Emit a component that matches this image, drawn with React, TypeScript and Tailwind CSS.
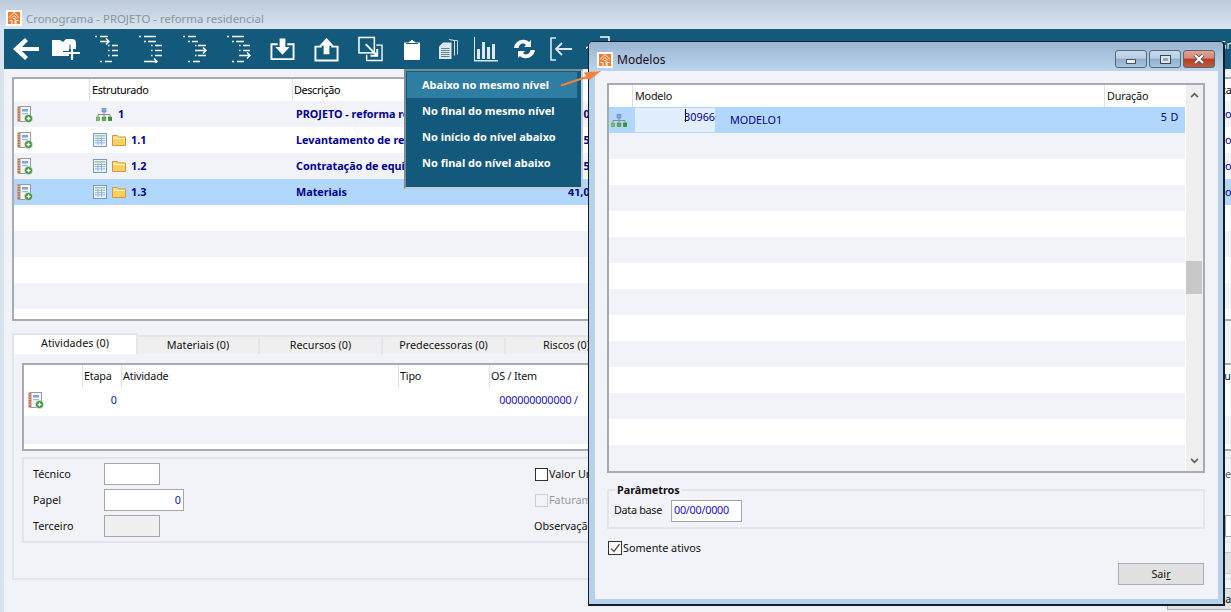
const blue = "text-[#00008b]";
const valueBlue = "text-[#1a10c0]";

const Logo = ({ className = "" }: { className?: string }) => (
  <svg viewBox="0 0 16 16" className={className}>
    <rect width="16" height="16" fill="#fff" />
    <rect x="2" y="2" width="12" height="12" fill="#f47b2a" />
    <path d="M8 2.500 3 7.500M8 2.500l5 5M8 5.500 5 8.500M8 5.500l3 3M3.500 10.500h2.500v3.500M12.500 10.500H10v3.500M7 8.500h2v5" stroke="#fff" strokeWidth="1" fill="none" />
  </svg>
);

const BookIcon = () => (
  <svg viewBox="0 0 16 17" className="w-4 h-[17px] shrink-0">
    <rect x="0.5" y="0.5" width="2.500" height="15" fill="#c8683a" />
    <path d="M0.500 2.500h2.500M0.500 5h2.500M0.500 7.500h2.500M0.500 10h2.500M0.500 12.500h2.500" stroke="#f3d2b8" strokeWidth="0.7" />
    <rect x="3" y="0.500" width="10.500" height="15" fill="#f7f7f7" stroke="#9a9a9a" />
    <rect x="5" y="3" width="6" height="2.500" fill="#7ba4de" />
    <rect x="5" y="7" width="6" height="1.200" fill="#9db8dc" />
    <circle cx="11.500" cy="12.500" r="4" fill="#3d8f3a" stroke="#e6f3e4" strokeWidth="0.6" />
    <path d="M11.500 10.500v4M9.500 12.500h4" stroke="#fff" strokeWidth="1.300" />
  </svg>
);

const TreeIcon = () => (
  <svg viewBox="0 0 16 13" className="w-4 h-[13px] shrink-0">
    <rect x="6" y="0" width="4" height="4" fill="#7ba7e6" stroke="#5a87c8" strokeWidth="0.6" />
    <path d="M8 4v2.500M2 8.500v-2h12v2M8 6.500v2" stroke="#8a8a8a" fill="none" />
    <rect x="0" y="9" width="3.600" height="3.600" fill="#7cc265" stroke="#4f9a40" strokeWidth="0.6" />
    <rect x="6.200" y="9" width="3.600" height="3.600" fill="#5cae4c" stroke="#3f8c34" strokeWidth="0.6" />
    <rect x="12.400" y="9" width="3.600" height="3.600" fill="#3b9a35" stroke="#2c7f28" strokeWidth="0.6" />
  </svg>
);

const TableIcon = () => (
  <svg viewBox="0 0 14 14" className="w-3.5 h-3.5 shrink-0">
    <rect x="0.500" y="0.500" width="13" height="13" fill="#eef4fb" stroke="#6f9bd0" />
    <rect x="2" y="2" width="10" height="1.600" fill="#9ed08c" />
    <path d="M2 5.500h10M2 7.700h10M2 9.900h10M5 4v8M8.500 4v8" stroke="#8fb0da" strokeWidth="0.9" />
  </svg>
);

const FolderIcon = () => (
  <svg viewBox="0 0 14 12" className="w-3.5 h-3 shrink-0">
    <path d="M0.500 1.500h5l1 1.500h7v8.500H.5z" fill="#f9dc7c" stroke="#d9923a" />
    <path d="M1.500 5h11.500v6H1.500z" fill="#f8d25e" />
    <path d="M1.500 4.500h11.500" stroke="#fff3c4" />
  </svg>
);

// tree list icons of the toolbar, arrow sits at a different row in each one
const listPaths: Record<number, string> = {
  1: "M0 1.500h2M5 1.500h8M5 6.500h9M11 3.500l3 3-3 3M13 10.500h1.500M17 10.500h6M13 15.500h1.500M17 15.500h6M13 20.500h1.500M17 20.500h6M5 26.500h2M10 26.500h7",
  2: "M0 1.500h2M5 1.500h12M5 6.500h2M9 6.500h8M12 10.500h1.500M16 10.500h7M12 15.500h1.500M16 15.500h7M12 20.500h1.500M16 20.500h7M5 26.500h13M15 23.500l3 3-3 3",
  3: "M0 1.500h2M5 1.500h8M5 6.500h2M9 6.500h6M12 10.500h1.500M15 10.500h8M12 15.500h11M20 12.500l3 3-3 3M12 20.500h1.500M15 20.500h8M5 26.500h2M10 26.500h7",
  4: "M0 1.500h2M5 1.500h12M5 6.500h2M9 6.500h8M12 10.500h1.500M16 10.500h7M12 15.500h1.500M16 15.500h7M12 20.500h11M20 17.500l3 3-3 3M5 26.500h2M10 26.500h7",
};

const ListIcon = ({ v }: { v: number }) => (
  <svg viewBox="0 0 24 28" className="w-6 h-7" stroke="#fff" strokeWidth="1.400" fill="none">
    <path d={listPaths[v]} />
  </svg>
);

const tools: { w: string; icon: React.ReactNode }[] = [
  {
    w: "w-[39px]",
    icon: (
      <svg viewBox="0 0 26 24" className="w-[26px] h-6" fill="#fff">
        <path d="M12 1 0 12l12 11 3-3-6-6h17v-4H9l6-6z" />
      </svg>
    ),
  },
  {
    w: "w-[43px]",
    icon: (
      <svg viewBox="0 0 28 26" className="w-7 h-[26px]">
        <path d="M0 4h8l3 2 3-3h6q4 0 4 4v6h-7v7H0z" fill="#fff" />
        <path d="M20 9v15M13 17h15" stroke="#fff" strokeWidth="2.200" />
        <path d="M18 8.500v7h-7" stroke="#13597c" strokeWidth="1" fill="none" />
      </svg>
    ),
  },
  { w: "w-[44px]", icon: <ListIcon v={1} /> },
  { w: "w-[44px]", icon: <ListIcon v={2} /> },
  { w: "w-[44px]", icon: <ListIcon v={3} /> },
  { w: "w-[43px]", icon: <ListIcon v={4} /> },
  {
    w: "w-[44px]",
    icon: (
      <svg viewBox="0 0 26 24" className="w-[25px] h-6" fill="none">
        <path d="M8 7H1.500v15.500h23V7H18" stroke="#fff" strokeWidth="2" />
        <path d="M10 1h6v9h4.500L13 18 5.500 10H10z" fill="#fff" />
      </svg>
    ),
  },
  {
    w: "w-[44px]",
    icon: (
      <svg viewBox="0 0 26 26" className="w-[25px] h-[25px]" fill="none">
        <path d="M8 10H1.500v14.500h23V10H18" stroke="#fff" strokeWidth="2" />
        <path d="M13 1l7.500 8H16v9h-6V9H5.500z" fill="#fff" />
      </svg>
    ),
  },
  {
    w: "w-[45px]",
    icon: (
      <svg viewBox="0 0 26 26" className="w-[25px] h-[26px]" fill="none" stroke="#fff">
        <rect x="1" y="1" width="16" height="16" strokeWidth="1.600" />
        <path d="M19 9h6v16H9v-6" strokeWidth="1.400" />
        <path d="M8 8l12 12M20 13v7h-7" strokeWidth="2" />
      </svg>
    ),
  },
  {
    w: "w-[35px]",
    icon: (
      <svg viewBox="0 0 18 21" className="w-[18px] h-[21px]" fill="#fff">
        <path d="M1 3.500h4.500L7 2h1V1h2v1h1l1.500 1.500H17V21H1z" />
        <path d="M3 4.500h12" stroke="#13597c" strokeWidth="1" />
      </svg>
    ),
  },
  {
    w: "w-[35px]",
    icon: (
      <svg viewBox="0 0 21 21" className="w-[21px] h-[21px]" fill="none">
        <path d="M15 1.500h4.500v14" stroke="#c3d2db" />
        <path d="M11 .5l5.500 1v15" stroke="#dfe7ec" />
        <path d="M5 3.500h8.500V20H1V7.500z" fill="#dfe7ec" />
        <path d="M3 9.500h8.500M3 11.500h8.500M3 13.500h8.500M3 15.500h8.500M3 17.500h8.500" stroke="#5f8397" />
      </svg>
    ),
  },
  {
    w: "w-[41px]",
    icon: (
      <svg viewBox="0 0 25 25" className="w-[25px] h-[25px]" fill="#dfe9ef">
        <path d="M1 0h1v23h23v1.500H1z" />
        <rect x="4" y="12" width="3" height="10" />
        <rect x="9" y="5" width="3" height="17" />
        <rect x="14" y="10" width="3" height="12" />
        <rect x="19" y="7" width="3" height="15" />
      </svg>
    ),
  },
  {
    w: "w-[36px]",
    icon: (
      <svg viewBox="0 0 21 20" className="w-[21px] h-5" fill="#fff">
        <path d="M0 9C1 3 6 0 11 1c2 .4 3 1 4 2l2-2v7h-7l2-2C9 3 5 5 4.500 9z" />
        <path d="M21 11c-1 6-6 9-11 8-2-.4-3-1-4-2l-2 2v-7h7l-2 2c3 3 7 1 7.500-3z" />
      </svg>
    ),
  },
  {
    w: "w-[36px]",
    icon: (
      <svg viewBox="0 0 23 24" className="w-[23px] h-6" fill="none" stroke="#dfe9ef">
        <path d="M6 1H1v22h5" strokeWidth="1.600" />
        <path d="M22 12H6M12 6l-6 6 6 6" strokeWidth="1.800" />
      </svg>
    ),
  },
  {
    w: "w-[40px]",
    icon: (
      <svg viewBox="0 0 24 26" className="w-6 h-[26px]" fill="none" stroke="#fff" strokeWidth="1.500">
        <path d="M14 1h9v24h-9M0 13q0-2 3-2" />
      </svg>
    ),
  },
];

const mainRows = [
  { icon: "tree", code: "1", desc: "PROJETO - reforma residencial", val: "41,0" },
  { icon: "table", code: "1.1", desc: "Levantamento de requisitos", val: "10,5" },
  { icon: "table", code: "1.2", desc: "Contratação de equipe", val: "12,5" },
  { icon: "table", code: "1.3", desc: "Materiais", val: "41,0" },
];

const Box = ({ className }: { className: string }) => <div className={`bg-white border border-[#a6a6a6] ${className}`} />;

const MainGrid = () => (
  <div className="w-[1250px] h-[244px] border-2 border-r-0 border-[#a9abb0] bg-[#f1f3f8] flex flex-col overflow-hidden">
    <div className="h-[22px] shrink-0 bg-white flex items-center text-black tracking-[-0.35px]">
      <div className="w-[75px] h-full" />
      <div className="w-[203px] h-full border-l border-[#dfe1e6] pl-[2px] flex items-center">Estruturado</div>
      <div className="w-[919px] h-full border-l border-[#dfe1e6] pl-[1px] flex items-center">Descrição</div>
      <div>Total</div>
    </div>
    {mainRows.map((r, i) => (
      <div
        key={r.code}
        className={`h-[26px] shrink-0 flex items-center font-bold ${blue} ${i === 3 ? "bg-[#b2d7fd]" : i % 2 ? "bg-white" : "bg-[#f1f3f8]"}`}
      >
        <div className="w-[78px] pl-[3px] shrink-0">
          <BookIcon />
        </div>
        <div className="w-[204px] shrink-0 flex items-center">
          {r.icon === "tree" ? (
            <div className="flex items-center gap-[6px] ml-[4px]">
              <TreeIcon />
              <span>{r.code}</span>
            </div>
          ) : (
            <div className="flex items-center gap-[5px] ml-[1px]">
              <TableIcon />
              <FolderIcon />
              <span>{r.code}</span>
            </div>
          )}
        </div>
        <div className="w-[272px] shrink-0 whitespace-nowrap overflow-hidden">{r.desc}</div>
        <div className="w-[642px] shrink-0">{r.val}</div>
        <div className="font-normal">Valor</div>
      </div>
    ))}
    {[0, 1, 2, 3, 4].map((i) => (
      <div key={i} className={`h-[26px] shrink-0 ${i % 2 ? "bg-[#f1f3f8]" : "bg-white"}`} />
    ))}
  </div>
);

const tabs = ["Materiais (0)", "Recursos (0)", "Predecessoras (0)", "Riscos (0)"];

const BottomPanel = () => (
  <div className="w-[1250px]">
    <div className="flex h-[21px] items-end">
      <div className="w-[126px] h-[21px] bg-white border-2 border-b-0 border-[#e3e5ea] flex items-center justify-center pb-[2px]">Atividades (0)</div>
      <div className="w-[122px] h-[19px] bg-[#efefef] border-t-2 border-r-2 border-[#e3e5ea] flex items-center justify-center">{tabs[0]}</div>
      {tabs.slice(1).map((t) => (
        <div key={t} className="w-[123px] h-[19px] bg-[#efefef] border-t-2 border-r-2 border-[#e3e5ea] flex items-center justify-center">
          {t}
        </div>
      ))}
    </div>
    <div className="h-[226px] border-2 border-t-0 border-[#e3e5ea] px-2 pt-[9px] bg-[#f1f3f8]">
      <div className="h-[88px] border-2 border-[#a9abb0] flex flex-col bg-[#f1f3f8]">
        <div className="h-[23px] shrink-0 bg-white flex items-center tracking-[-0.2px]">
          <div className="w-[58px] h-full" />
          <div className="w-[39px] h-full border-l border-[#dfe1e6] pl-[1px] flex items-center">Etapa</div>
          <div className="w-[277px] h-full border-l border-[#dfe1e6] pl-[1px] flex items-center">Atividade</div>
          <div className="w-[91px] h-full border-l border-[#dfe1e6] pl-[1px] flex items-center">Tipo</div>
          <div className="w-[727px] h-full border-l border-[#dfe1e6] pl-[1px] flex items-center">OS / Item</div>
          <div>Qu</div>
        </div>
        <div className={`h-[28px] shrink-0 bg-white flex items-center pb-[4px] ${valueBlue}`}>
          <div className="w-[58px] pl-[4px]">
            <BookIcon />
          </div>
          <div className="w-[35px] text-right">0</div>
          <div className="w-[461px] text-right tracking-[-0.15px]">000000000000 /</div>
        </div>
        <div className="h-[28px] shrink-0" />
        <div className="flex-1 bg-white" />
      </div>
      <div className="h-[86px] mt-[6px] border-2 border-[#e3e5ea] pl-[9px] pt-[4px] flex">
        <div className="w-[71px] shrink-0 flex flex-col gap-[4px]">
          <div className="h-[22px] flex items-center">Técnico</div>
          <div className="h-[22px] flex items-center">Papel</div>
          <div className="h-[22px] flex items-center">Terceiro</div>
        </div>
        <div className="w-[431px] shrink-0 flex flex-col gap-[4px]">
          <Box className="w-14 h-[22px]" />
          <div className={`w-20 h-[22px] bg-white border border-[#a6a6a6] flex items-center justify-end pr-[2px] ${valueBlue}`}>0</div>
          <div className="w-14 h-[22px] bg-[#f0f0f0] border border-[#a6a6a6]" />
        </div>
        <div className="w-[690px] shrink-0 flex flex-col gap-[4px]">
          <div className="h-[22px] flex items-center gap-[1px]">
            <div className="w-[13px] h-[13px] border border-[#333] bg-white" />
            Valor Unitário
          </div>
          <div className="h-[22px] flex items-center gap-[1px] text-[#9a9a9a]">
            <div className="w-[13px] h-[13px] border border-[#cfcfcf]" />
            Faturamento
          </div>
          <div className="h-[22px] flex items-center -ml-[1px]">Observação</div>
        </div>
        <div className="flex flex-col gap-[4px] text-[#666]">
          <div className="h-[22px] flex items-center">e</div>
          <div className="h-[22px]" />
          <Box className="w-14 h-[22px]" />
        </div>
      </div>
      <div className="mt-[9px] ml-[1180px] h-[22px] bg-[#e1e1e1] border border-[#c4c4c4]" />
    </div>
    <div className="mt-[8px] flex justify-end mr-[9px]">
      <div className="w-[86px] h-[22px] bg-[#e1e1e1] border border-[#adadad] flex items-center justify-center">Confirmar</div>
    </div>
  </div>
);

const FloatingMenu = () => {
  const items = ["Abaixo no mesmo nível", "No final do mesmo nível", "No início do nível abaixo", "No final do nível abaixo"];
  return (
    <div className="absolute left-[404px] top-[69px] w-[179px] h-[120px] bg-[#13597c] border-2 border-[#c4cdd4] border-t-[#7d8b95] border-l-[#7d8b95] pt-[1px] px-[1px] font-bold text-white">
      {items.map((t, i) => (
        <div key={t} className={`h-[26px] pl-[15px] flex items-center text-[11px] ${i === 0 ? "bg-[#2e7da3] w-[170px]" : ""}`}>
          {t}
        </div>
      ))}
    </div>
  );
};

const ModalGrid = () => {
  const rows = Array.from({ length: 14 }, (_, i) => i);
  return (
    <div className="h-[390px] border-2 border-[#a9abb0] flex bg-white relative">
      <div className="flex-1 flex flex-col min-w-0">
        <div className="h-[22px] shrink-0 bg-white flex items-center tracking-[-0.2px]">
          <div className="w-[23px] h-full" />
          <div className="w-[472px] h-full border-l border-[#dfe1e6] pl-[2px] flex items-center">Modelo</div>
          <div className="flex-1 h-full border-l border-[#dfe1e6] pl-[2px] flex items-center">Duração</div>
        </div>
        {rows.map((i) =>
          i === 0 ? (
            <div key={i} className={`h-[26px] shrink-0 bg-[#b2d7fd] flex items-center relative ${blue}`}>
              <div className="w-[26px] pl-[2px]">
                <TreeIcon />
              </div>
              <div className="w-[80px] h-[24px] bg-[#e1effd] text-right leading-[17px] relative">
                <span className="absolute left-[50px] top-[1px] w-[1px] h-[13px] bg-[#111]" />
                30966
              </div>
              <div className="ml-[15px]">MODELO1</div>
              <div className="ml-auto pr-[6px] -mt-[5px] tracking-[0.5px]">5 D</div>
            </div>
          ) : (
            <div key={i} className={`h-[26px] shrink-0 ${i % 2 ? "bg-[#f1f3f8]" : "bg-white"}`} />
          ),
        )}
      </div>
      <div className="w-[18px] shrink-0 bg-[#efefef] border-l border-white flex flex-col items-center relative">
        <svg viewBox="0 0 10 7" className="w-[9px] h-[6px] mt-[7px]" fill="none" stroke="#606060" strokeWidth="2">
          <path d="M1 6l4-4 4 4" />
        </svg>
        <div className="absolute top-[176px] left-0 w-[16px] h-[33px] bg-[#c8c8c8]" />
        <svg viewBox="0 0 10 7" className="w-[9px] h-[6px] mt-auto mb-[7px]" fill="none" stroke="#606060" strokeWidth="2">
          <path d="M1 1l4 4 4-4" />
        </svg>
      </div>
    </div>
  );
};

const WinButton = ({ kind }: { kind: "min" | "max" | "close" }) => (
  <div
    className={`w-[32px] h-[18px] rounded-[3px] border border-[#5c6670] flex items-center justify-center ${
      kind === "close"
        ? "bg-[linear-gradient(#e6a08f_0%,#d38a78_45%,#b73c22_50%,#bd5a3f_100%)]"
        : "bg-[linear-gradient(#c7d9ec_0%,#b9cfe6_45%,#8fafcf_50%,#a9c4df_100%)]"
    }`}
  >
    {kind === "min" && <div className="w-[10px] h-[5px] mt-[4px] bg-[#eef2f6] border border-[#4a5560]" />}
    {kind === "max" && (
      <div className="w-[11px] h-[9px] border border-[#3c4650] bg-[#dbe5ef] flex items-center justify-center">
        <div className="w-[5px] h-[3px] bg-[#8fa5bb]" />
      </div>
    )}
    {kind === "close" && (
      <svg viewBox="0 0 12 10" className="w-3 h-[10px]">
        <path d="M2 1l8 8M10 1l-8 8" stroke="#3f4650" strokeWidth="3.600" />
        <path d="M2 1l8 8M10 1l-8 8" stroke="#fff" strokeWidth="2.200" />
      </svg>
    )}
  </div>
);

const Modal = () => (
  <div className="absolute left-[588px] top-[41px] w-[637px] h-[565px] rounded-t-[5px] border border-[#10202c] border-r-2 border-b-2 bg-[#b8d1ea] flex flex-col">
    <div className="h-[29px] shrink-0 rounded-t-[4px] bg-[linear-gradient(#9ab4d1,#bcd4ec)] flex items-center pl-[8px] pr-[8px] pt-[7px]">
      <Logo className="w-4 h-4" />
      <span className="ml-[4px] text-[12px] text-[#1a0a20]">Modelos</span>
      <div className="ml-auto flex gap-[2px] -mt-[2px]">
        <WinButton kind="min" />
        <WinButton kind="max" />
        <WinButton kind="close" />
      </div>
    </div>
    <div className="w-[623px] h-[528px] ml-[6px] bg-[#f1f3f8] pl-3 pr-[13px] pt-3 flex flex-col">
      <ModalGrid />
      <div className="relative h-[40px] mt-4 border-2 border-[#e3e5ea] pl-[5px] flex items-center">
        <span className="absolute left-[6px] -top-[9px] bg-[#f1f3f8] px-[2px] font-bold">Parâmetros</span>
        <span className="mt-[3px] w-[57px] tracking-[-0.3px]">Data base</span>
        <div className={`w-[71px] h-[22px] mt-[3px] bg-white border border-[#a6a6a6] flex items-center pl-[2px] tracking-[-0.25px] ${valueBlue}`}>00/00/0000</div>
      </div>
      <div className="flex items-center mt-[11px] ml-[1px] gap-[1px]">
        <div className="w-[14px] h-[14px] border border-[#333] bg-white flex items-center justify-center">
          <svg viewBox="0 0 12 12" className="w-3 h-3" fill="none" stroke="#555" strokeWidth="1.400">
            <path d="M2 6.500l3 3 5.500-7.500" />
          </svg>
        </div>
        Somente ativos
      </div>
      <div className="self-end mt-[7px] mr-[1px] w-[86px] h-[22px] bg-[#e1e1e1] border border-[#adadad] flex items-center justify-center">
        <span>
          Sai<span className="underline">r</span>
        </span>
      </div>
    </div>
  </div>
);

const Arrow = () => (
  <svg viewBox="0 0 44 18" className="absolute left-[560px] top-[70px] w-11 h-[18px] z-10">
    <path d="M1 15.500 28 6.500" stroke="#f4813c" strokeWidth="2" />
    <path d="M41 1 24 2.500l5 8z" fill="#f4813c" />
  </svg>
);

export default function App() {
  return (
    <div className="relative w-[1231px] h-[612px] overflow-hidden bg-[#f1f3f8] text-[10.8px] text-[#111] font-['Noto_Sans','Open_Sans',sans-serif]">
      <div className="h-[29px] bg-[linear-gradient(#bccad8,#d8e5f1)] flex items-center pl-[6px] pt-[6px]">
        <Logo className="w-4 h-4" />
        <span className="ml-1 mt-[2px] text-[11.4px] text-[#8c949c]">Cronograma - PROJETO - reforma residencial</span>
      </div>
      <div className="flex h-[583px]">
        <div className="w-1 shrink-0 bg-[#d8e5f1]" />
        <div className="flex-1 min-w-0 flex flex-col">
          <div className="h-[40px] shrink-0 bg-[#13597c] flex items-center pl-[9px] text-white">
            {tools.map((t, i) => (
              <div key={i} className={`${t.w} shrink-0 flex items-center`}>
                {t.icon}
              </div>
            ))}
            <span className="ml-auto text-[11px] -mt-[8px]">Gr</span>
          </div>
          <div className="pl-2 pt-2 flex flex-col gap-3">
            <MainGrid />
            <BottomPanel />
          </div>
        </div>
      </div>
      <FloatingMenu />
      <Modal />
      <Arrow />
    </div>
  );
}
